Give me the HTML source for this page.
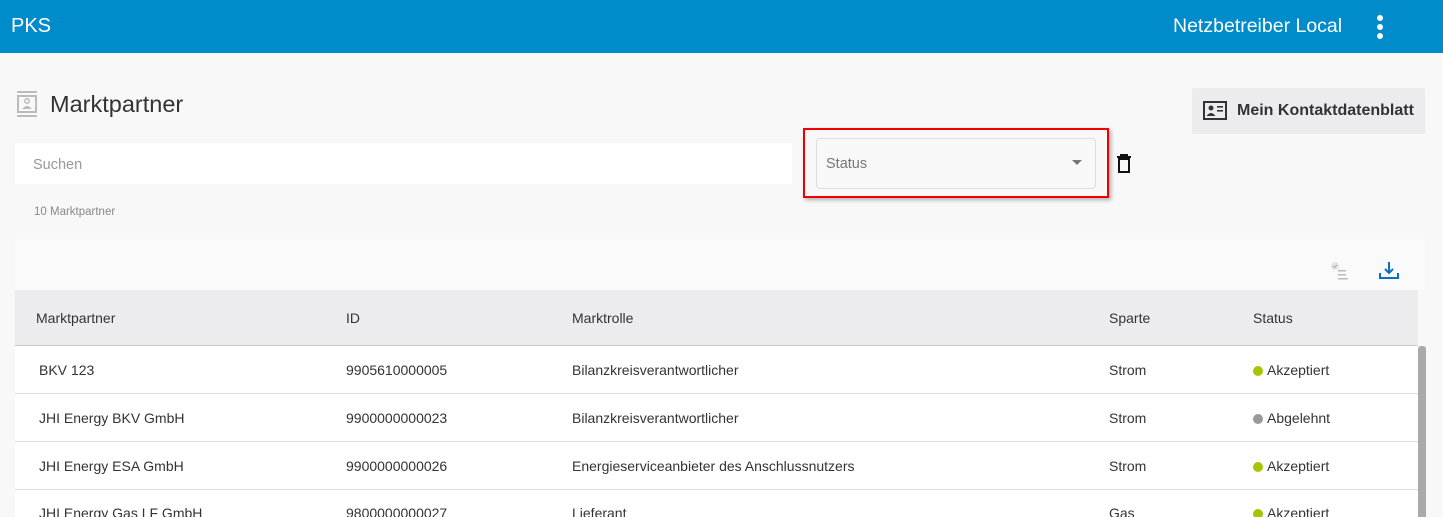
<!DOCTYPE html>
<html><head><meta charset="utf-8"><style>
*{box-sizing:border-box;margin:0;padding:0}
html,body{width:1443px;height:517px;overflow:hidden}
body{background:#f8f8f8;font-family:"Liberation Sans",sans-serif;color:#333;position:relative}
.top{position:absolute;left:0;top:0;width:1443px;height:53px;background:#008bca;color:#fff}
.abs{position:absolute}
.t{font-size:14px;color:#333;white-space:nowrap}
.row{position:absolute;left:15px;width:1403px;height:48px;background:#fff;border-bottom:1px solid #ddd}
.dot{display:inline-block;width:10px;height:10px;border-radius:50%;margin-right:4px;vertical-align:-1px}
</style></head><body>
<div class="top">
 <div class="abs" style="left:11px;top:15px;font-size:20px">PKS</div>
 <div class="abs" style="left:1173px;top:15px;font-size:19.5px">Netzbetreiber Local</div>
 <div class="abs" style="left:1377px;top:15px;width:6px">
  <div style="width:6px;height:6px;border-radius:50%;background:#fff;margin-bottom:3px"></div>
  <div style="width:6px;height:6px;border-radius:50%;background:#fff;margin-bottom:3px"></div>
  <div style="width:6px;height:6px;border-radius:50%;background:#fff"></div>
 </div>
</div>
<svg class="abs" style="left:16px;top:91px" width="22" height="26" viewBox="0 0 22 26"><rect x="1" y="0" width="20" height="2" fill="#bbb"/><rect x="1" y="24" width="20" height="2" fill="#bbb"/><rect x="2" y="5" width="18" height="16" fill="none" stroke="#bbb" stroke-width="2"/><circle cx="11" cy="10" r="2.2" fill="none" stroke="#bbb" stroke-width="1.5"/><path d="M6 18 Q11 12 16 18Z" fill="#bbb"/></svg>
<div class="abs" style="left:50px;top:91px;font-size:23.5px;color:#333">Marktpartner</div>
<div class="abs" style="left:15px;top:143px;width:777px;height:41px;background:#fff"></div>
<div class="abs" style="left:33px;top:157px;font-size:14.5px;color:#999">Suchen</div>
<div class="abs" style="left:34px;top:206px;font-size:11.5px;color:#888">10 Marktpartner</div>
<div class="abs" style="left:803px;top:128px;width:306px;height:70px;border:2px solid #e00;box-shadow:2px 2px 4px rgba(0,0,0,.3)"></div>
<div class="abs" style="left:816px;top:138px;width:280px;height:51px;border:1px solid #ddd;border-radius:4px;background:#f8f8f8"></div>
<div class="abs" style="left:826px;top:156px;font-size:14.5px;color:#777">Status</div>
<div class="abs" style="left:1072px;top:160px;width:0;height:0;border-left:5px solid transparent;border-right:5px solid transparent;border-top:5px solid #777"></div>
<svg class="abs" style="left:1116px;top:153px" width="16" height="20" viewBox="0 0 16 20"><rect x="4" y="1" width="8" height="2" fill="#111"/><rect x="1" y="3" width="14" height="2" fill="#111"/><rect x="3" y="6" width="10" height="13" fill="none" stroke="#111" stroke-width="2"/></svg>
<div class="abs" style="left:1192px;top:88px;width:233px;height:46px;background:#ececee;border-radius:2px"></div>
<svg class="abs" style="left:1203px;top:101px" width="24" height="19" viewBox="0 0 24 19"><rect x="1" y="1" width="22" height="17" fill="none" stroke="#333" stroke-width="2"/><circle cx="8" cy="7" r="2.5" fill="#333"/><path d="M3.5 15 Q8 9 12.5 15Z" fill="#333"/><rect x="14" y="5" width="6" height="1.6" fill="#333"/><rect x="14" y="9" width="6" height="1.6" fill="#333"/></svg>
<div class="abs" style="left:1237px;top:102px;font-size:16px;font-weight:bold;color:#333">Mein Kontaktdatenblatt</div>
<div class="abs" style="left:15px;top:238px;width:1410px;height:52px;background:#fafafa"></div>
<svg class="abs" style="left:1330px;top:262px" width="20" height="18" viewBox="0 0 20 18"><circle cx="5" cy="4" r="4" fill="#e4e4e4"/><path d="M3 4l1.5 1.5L7 3" stroke="#aaa" fill="none"/><rect x="8" y="8" width="8" height="1.5" fill="#bbb"/><rect x="8" y="12" width="8" height="1.5" fill="#bbb"/><rect x="8" y="16" width="10" height="1.5" fill="#bbb"/></svg>
<svg class="abs" style="left:1379px;top:261px" width="20" height="19" viewBox="0 0 20 19"><path d="M10 1v11M6 8l4 4 4-4" stroke="#0a6fc2" stroke-width="2" fill="none"/><path d="M1 12v5h18v-5" stroke="#0a6fc2" stroke-width="2" fill="none"/></svg>
<div class="abs" style="left:15px;top:290px;width:1403px;height:56px;background:#ececee;border-bottom:1px solid #ccc"></div>
<div class="abs t" style="left:36px;top:310px">Marktpartner</div>
<div class="abs t" style="left:346px;top:310px">ID</div>
<div class="abs t" style="left:572px;top:310px">Marktrolle</div>
<div class="abs t" style="left:1109px;top:310px">Sparte</div>
<div class="abs t" style="left:1253px;top:310px">Status</div>
<div class="row" style="top:346px"></div>
<div class="row" style="top:394px"></div>
<div class="row" style="top:442px"></div>
<div class="row" style="top:490px"></div>
<div class="abs t" style="left:39px;top:362px">BKV 123</div><div class="abs t" style="left:346px;top:362px">9905610000005</div><div class="abs t" style="left:572px;top:362px">Bilanzkreisverantwortlicher</div><div class="abs t" style="left:1109px;top:362px">Strom</div><div class="abs t" style="left:1253px;top:362px"><span class="dot" style="background:#a8c400"></span>Akzeptiert</div>
<div class="abs t" style="left:39px;top:410px">JHI Energy BKV GmbH</div><div class="abs t" style="left:346px;top:410px">9900000000023</div><div class="abs t" style="left:572px;top:410px">Bilanzkreisverantwortlicher</div><div class="abs t" style="left:1109px;top:410px">Strom</div><div class="abs t" style="left:1253px;top:410px"><span class="dot" style="background:#999"></span>Abgelehnt</div>
<div class="abs t" style="left:39px;top:458px">JHI Energy ESA GmbH</div><div class="abs t" style="left:346px;top:458px">9900000000026</div><div class="abs t" style="left:572px;top:458px">Energieserviceanbieter des Anschlussnutzers</div><div class="abs t" style="left:1109px;top:458px">Strom</div><div class="abs t" style="left:1253px;top:458px"><span class="dot" style="background:#a8c400"></span>Akzeptiert</div>
<div class="abs t" style="left:39px;top:505px">JHI Energy Gas LF GmbH</div><div class="abs t" style="left:346px;top:505px">9800000000027</div><div class="abs t" style="left:572px;top:505px">Lieferant</div><div class="abs t" style="left:1109px;top:505px">Gas</div><div class="abs t" style="left:1253px;top:505px"><span class="dot" style="background:#a8c400"></span>Akzeptiert</div>
<div class="abs" style="left:1418px;top:346px;width:8px;height:171px;background:#aaa;border-radius:3px 3px 0 0"></div>
</body></html>
